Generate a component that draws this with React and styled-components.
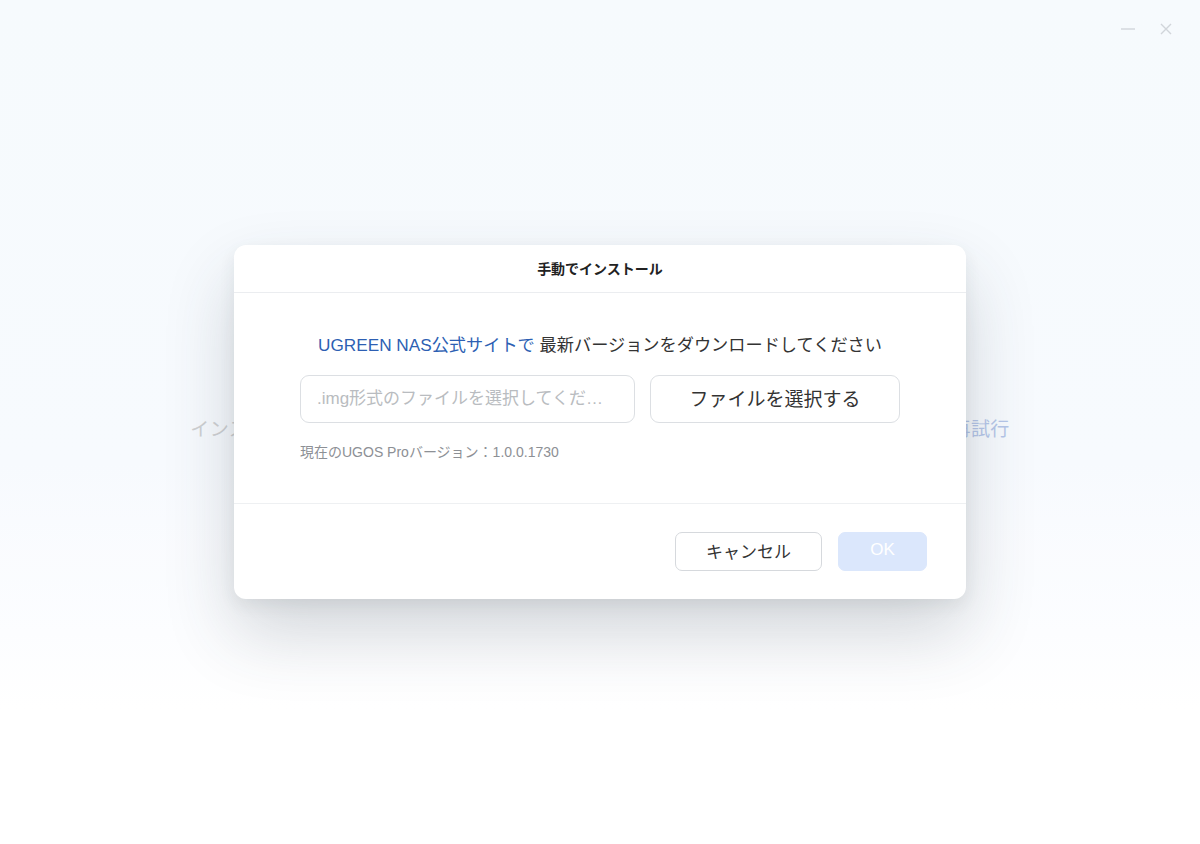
import styled, { createGlobalStyle } from "styled-components";

const GlobalStyle = createGlobalStyle`
  html, body {
    margin: 0;
    padding: 0;
  }
  body {
    font-family: "Liberation Sans", "Noto Sans CJK JP", sans-serif;
    color: #333;
  }
`;

export default function App() {
  return (
    <>
      <GlobalStyle />
      <Page>
        <WindowBar>
          <WinButton aria-label="minimize">
            <svg width="16" height="16" viewBox="0 0 16 16">
              <path d="M1 8h14" stroke="#c9ced4" strokeWidth="1.4" />
            </svg>
          </WinButton>
          <WinButton aria-label="close">
            <svg width="16" height="16" viewBox="0 0 16 16">
              <path
                d="M3 3l10 10M13 3L3 13"
                stroke="#c9ced4"
                strokeWidth="1.4"
              />
            </svg>
          </WinButton>
        </WindowBar>

        <Behind>
          <Status>
            インストールパッケージのダウンロードに失敗しました。ネットワーク接続を確認して
            <Retry>再試行</Retry>
          </Status>
        </Behind>

        <Overlay>
          <Dialog>
            <Header>手動でインストール</Header>

            <Body>
              <Lead>
                <LinkText>UGREEN NAS公式サイトで</LinkText> 最新バージョンをダウンロードしてください
              </Lead>

              <PickRow>
                <FileInput placeholder=".img形式のファイルを選択してください" readOnly />
                <PickButton>ファイルを選択する</PickButton>
              </PickRow>

              <Version>現在のUGOS Proバージョン：1.0.0.1730</Version>
            </Body>

            <Footer>
              <Button>キャンセル</Button>
              <Button primary disabled>
                OK
              </Button>
            </Footer>
          </Dialog>
        </Overlay>
      </Page>
    </>
  );
}

const Page = styled.div`
  position: relative;
  width: 1200px;
  height: 844px;
  overflow: hidden;
  background: linear-gradient(
    180deg,
    #f5f9fd 0%,
    #f6fafe 55%,
    #fcfdff 75%,
    #ffffff 84%
  );
`;

const WindowBar = styled.div`
  display: flex;
  justify-content: flex-end;
  gap: 22px;
  padding: 21px 26px 0 0;
`;

const WinButton = styled.div`
  width: 16px;
  height: 16px;
  display: flex;
  align-items: center;
  justify-content: center;
`;

const Behind = styled.div`
  display: flex;
  justify-content: center;
  padding-top: 377px;
`;

const Status = styled.div`
  font-family: "Noto Sans CJK JP", sans-serif;
  font-size: 19px;
  color: #c6c8cb;
  white-space: nowrap;
  letter-spacing: 0.4px;
`;

const Retry = styled.span`
  color: #a9bde6;
  margin-left: 6px;
`;

const Overlay = styled.div`
  position: absolute;
  inset: 0;
  display: flex;
  justify-content: center;
  padding-top: 245px;
  background: rgba(255, 255, 255, 0.15);
`;

const Dialog = styled.div`
  width: 732px;
  height: 354px;
  box-sizing: border-box;
  background: #fff;
  border-radius: 12px;
  box-shadow: 0 34px 70px rgba(50, 60, 70, 0.2),
    0 6px 16px rgba(50, 60, 70, 0.08);
  display: flex;
  flex-direction: column;
`;

const Header = styled.div`
  height: 48px;
  box-sizing: border-box;
  border-bottom: 1px solid #ebedf0;
  display: flex;
  align-items: center;
  justify-content: center;
  font-family: "Noto Sans CJK JP", sans-serif;
  font-size: 14px;
  font-weight: 700;
  color: #222;
  padding-bottom: 1px;
`;

const Body = styled.div`
  padding: 41px 66px 0;
  height: 211px;
  box-sizing: border-box;
  border-bottom: 1px solid #eef0f2;
  display: flex;
  flex-direction: column;
`;

const Lead = styled.div`
  text-align: center;
  font-size: 17.2px;
  line-height: 22px;
  color: #333;
`;

const LinkText = styled.span`
  color: #2d5fb3;
`;

const PickRow = styled.div`
  display: flex;
  gap: 15px;
  margin-top: 19px;
`;

const FileInput = styled.input`
  width: 335px;
  height: 48px;
  box-sizing: border-box;
  border: 1px solid #dcdfe3;
  border-radius: 9px;
  padding: 0 16px;
  font-family: "Liberation Sans", "Noto Sans CJK JP", sans-serif;
  font-size: 17px;
  outline: none;
  text-overflow: ellipsis;
  &::placeholder {
    color: #b9bcc0;
  }
`;

const PickButton = styled.button`
  width: 250px;
  height: 48px;
  padding: 0 0 4px;
  background: #fff;
  border: 1px solid #dcdfe3;
  border-radius: 9px;
  font-family: "Liberation Sans", "Noto Sans CJK JP", sans-serif;
  font-size: 19px;
  color: #333;
`;

const Version = styled.div`
  margin-top: 18px;
  font-size: 14px;
  color: #8d9095;
`;

const Footer = styled.div`
  flex: 1;
  display: flex;
  justify-content: flex-end;
  align-items: flex-start;
  gap: 16px;
  padding: 28px 39px 0 0;
`;

const Button = styled.button`
  height: 39px;
  min-width: ${({ primary }) => (primary ? "89px" : "147px")};
  padding: 0 0 3px;
  box-sizing: border-box;
  border-radius: 7px;
  border: 1px solid ${({ primary }) => (primary ? "#dbe7fc" : "#d6d9dd")};
  background: ${({ primary }) => (primary ? "#dbe7fc" : "#fff")};
  color: ${({ primary }) => (primary ? "#fff" : "#333")};
  font-family: "Liberation Sans", "Noto Sans CJK JP", sans-serif;
  font-size: 17px;
`;
